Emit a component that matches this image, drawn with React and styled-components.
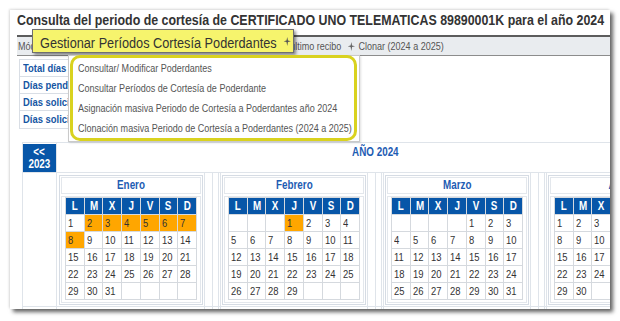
import React from "react";
import styled, { createGlobalStyle } from "styled-components";

const FONT = `"Liberation Sans", Arial, sans-serif`;

const GlobalStyle = createGlobalStyle`
  html, body { margin: 0; padding: 0; background: #fff; }
  body { font-family: ${FONT}; }
  * { box-sizing: border-box; }
`;

/* the reference text is a narrow (Arial Narrow-like) face */
const Squeeze = styled.span`
  display: inline-block;
  white-space: nowrap;
  transform: scaleX(${(p) => p.$ratio || 0.82});
  transform-origin: ${(p) => (p.$center ? "center" : "left")} center;
`;

const Page = styled.div`
  width: 620px;
  height: 321px;
  padding: 10px 0 0 10px;
  overflow: hidden;
`;

const Card = styled.div`
  position: relative;
  width: 600px;
  height: 299px;
  padding-left: 7px;
  background: #fff;
  overflow: hidden;
  box-shadow: 3px 3px 4px rgba(0, 0, 0, 0.62), -1px -1px 2px rgba(0, 0, 0, 0.12);
`;

const Title = styled.h1`
  margin: 0;
  padding-bottom: 5px;
  font-size: 15px;
  line-height: 20px;
  font-weight: bold;
  color: #333;
  white-space: nowrap;
`;

const MenuBar = styled.div`
  height: 21px;
  padding-left: 1px;
  border-top: 2px solid #5c5c5c;
  border-bottom: 1px solid #8c8c8c;
  background: #e9ecef;
  font-size: 11px;
  line-height: 18px;
  color: #555;
  white-space: nowrap;
`;

const MenuInner = styled.div`
  display: flex;
  align-items: center;
  gap: 8px;
  height: 18px;
  transform: scaleX(0.82);
  transform-origin: left center;
`;

const MenuItem = styled.span`
  display: inline-flex;
  align-items: center;
  gap: 4px;
`;

const InfoTable = styled.div`
  width: 240px;
  margin: 3px 0 0 2px;
  border: 1px solid #d9dee5;
`;

const InfoRow = styled.div`
  display: grid;
  grid-template-columns: 150px 1fr;
  height: 17px;
  border-bottom: ${(p) => (p.$last ? "none" : "1px solid #d9dee5")};
`;

const InfoLabel = styled.div`
  padding-left: 3px;
  font-size: 11.5px;
  font-weight: bold;
  line-height: 16px;
  color: #1656a3;
  white-space: nowrap;
  border-right: 1px solid #d9dee5;
`;

const InfoValue = styled.div`
  font-size: 11px;
  line-height: 16px;
  text-align: right;
  padding-right: 4px;
  color: #333;
`;

const CalTable = styled.div`
  width: 690px;
  margin: 13px 0 0 5px;
  border-left: 1px solid #dfe4ea;
  border-top: 1px solid #dfe4ea;
`;

const HeaderRow = styled.div`
  display: flex;
  height: 30px;
  border-bottom: 1px solid #dfe4ea;
`;

const SideCell = styled.div`
  flex: 0 0 34px;
  border-right: 1px solid #dfe4ea;
`;

const PrevButton = styled.a`
  display: block;
  height: 28px;
  margin-top: 1px;
  padding-top: 2px;
  background: #0756a8;
  color: #fff;
  font-size: 12px;
  font-weight: bold;
  line-height: 12px;
  text-align: center;
  text-decoration: underline;
`;

const YearCell = styled.div`
  flex: 1;
  padding: 2px 19px 0 0;
  font-size: 12px;
  font-weight: bold;
  line-height: 14px;
  color: #1d5cb3;
  text-align: center;
`;

const MonthRow = styled.div`
  display: flex;
  border-bottom: 1px solid #dfe4ea;
`;

const MonthCell = styled.div`
  flex: 0 0 auto;
  padding: 2px 1px 1px ${(p) => (p.$first ? "2px" : "1px")};
  border-left: ${(p) => (p.$first ? "none" : "1px solid #dfe4ea")};
  border-right: 1px solid #dfe4ea;
`;

const Separator = styled.div`
  flex: 0 0 7px;
  margin: 0 1px 0 7px;
  border-left: 1px solid #dfe4ea;
  border-right: 1px solid #dfe4ea;
`;

const MonthBox = styled.div`
  display: flex;
  flex-direction: column;
  width: 144px;
  height: 130px;
  padding: 1px;
  border: 1px solid #d6dce4;
`;

const MonthTitle = styled.div`
  height: 17px;
  border: 1px solid #e3e7ec;
  font-size: 12px;
  font-weight: bold;
  line-height: 15px;
  color: #1d5cb3;
  text-align: center;
`;

const MonthBody = styled.div`
  flex: 1;
  margin-top: 2px;
  padding: 0 3px 2px 3px;
  border: 1px solid #e3e7ec;
`;

const DayGrid = styled.div`
  display: grid;
  grid-template-columns: repeat(7, 1fr);
  grid-auto-rows: 16px;
  gap: 1px;
  border: 1px solid #d5d9de;
  background: #d5d9de;
`;

const HeadCell = styled.div`
  background: #0756a8;
  color: #fff;
  font-size: 12px;
  font-weight: bold;
  line-height: 16px;
  text-align: center;
`;

const DayCell = styled.div`
  background: ${(p) => (p.$marked ? "#ffa600" : "#fff")};
  color: #333;
  font-size: 11.5px;
  line-height: 16px;
  padding-left: 2px;
`;

const Tooltip = styled.div`
  position: absolute;
  left: 22px;
  top: 19px;
  width: 262px;
  height: 24px;
  padding-left: 7px;
  background: #f6f46d;
  border: 1px solid #6f6f6f;
  box-shadow: 2px 2px 3px rgba(0, 0, 0, 0.45);
  font-size: 15.5px;
  line-height: 22px;
  color: #333;
  white-space: nowrap;
`;

const TipIcon = styled.span`
  display: inline-block;
  margin-left: 8px;
  vertical-align: 2px;
`;

const MenuPanel = styled.div`
  position: absolute;
  left: 58px;
  top: 45px;
  width: 292px;
  height: 87px;
  background: #fff;
  border: 1px solid #cacaca;
  box-shadow: 1px 1px 2px rgba(0, 0, 0, 0.12);
`;

const Highlight = styled.div`
  height: 86px;
  margin: -1px 2px 0 1px;
  padding-left: 5px;
  border: 3px solid #d9d21f;
  border-radius: 10px;
`;

const PanelItem = styled.div`
  font-size: 11px;
  line-height: 20px;
  color: #555;
  white-space: nowrap;
  transform: scaleX(0.82);
  transform-origin: left center;
`;

const Star = ({ color = "#666" }) => (
  <svg width="9" height="9" viewBox="0 0 9 9">
    <path d="M4.5 0 L5.4 3.4 L9 4.2 L5.4 5 L4.5 9 L3.6 5 L0 4.2 L3.6 3.4 Z" fill={color} />
  </svg>
);

const DOW = ["L", "M", "X", "J", "V", "S", "D"];

const MONTHS = [
  [
    { name: "Enero", offset: 0, days: 31, marked: [2, 3, 4, 5, 6, 7, 8] },
    { name: "Febrero", offset: 3, days: 29, marked: [1] },
    { name: "Marzo", offset: 4, days: 31, marked: [] },
    { name: "Abril", offset: 0, days: 30, marked: [] },
  ],
  [
    { name: "Mayo", offset: 2, days: 31, marked: [] },
    { name: "Junio", offset: 5, days: 30, marked: [] },
    { name: "Julio", offset: 0, days: 31, marked: [] },
    { name: "Agosto", offset: 3, days: 31, marked: [] },
  ],
];

function Month({ month }) {
  const total = Math.ceil((month.offset + month.days) / 7) * 7;
  const cells = [];
  for (let i = 0; i < total; i++) {
    const d = i - month.offset + 1;
    const valid = d >= 1 && d <= month.days;
    cells.push(
      <DayCell key={i} $marked={valid && month.marked.includes(d)}>
        {valid ? <Squeeze>{d}</Squeeze> : ""}
      </DayCell>
    );
  }
  return (
    <MonthBox>
      <MonthTitle>
        <Squeeze $center>{month.name}</Squeeze>
      </MonthTitle>
      <MonthBody>
        <DayGrid>
          {DOW.map((d) => (
            <HeadCell key={d}>
              <Squeeze $center>{d}</Squeeze>
            </HeadCell>
          ))}
          {cells}
        </DayGrid>
      </MonthBody>
    </MonthBox>
  );
}

const INFO = [
  ["Total días cortesía", "30"],
  ["Días pendientes", "22"],
  ["Días solicitados", "8"],
  ["Días solicitados (pend.)", "0"],
];

export default function App() {
  return (
    <>
      <GlobalStyle />
      <Page>
        <Card>
          <Title>
            <Squeeze $ratio={0.826}>
              Consulta del periodo de cortesía de CERTIFICADO UNO TELEMATICAS 89890001K para el año 2024
            </Squeeze>
          </Title>
          <MenuBar>
            <MenuInner>
              <MenuItem>Módulo de Poderdantes</MenuItem>
              <MenuItem>
                <Star /> Gestionar Períodos Cortesía
              </MenuItem>
              <MenuItem>
                <Star /> Fecha último recibo
              </MenuItem>
              <MenuItem>
                <Star /> Clonar (2024 a 2025)
              </MenuItem>
            </MenuInner>
          </MenuBar>
          <InfoTable>
            {INFO.map(([label, value], i) => (
              <InfoRow key={label} $last={i === INFO.length - 1}>
                <InfoLabel>
                  <Squeeze>{label}</Squeeze>
                </InfoLabel>
                <InfoValue>{value}</InfoValue>
              </InfoRow>
            ))}
          </InfoTable>
          <CalTable>
            <HeaderRow>
              <SideCell>
                <PrevButton>
                  <Squeeze $center>&lt;&lt;</Squeeze>
                  <br />
                  <Squeeze $center>2023</Squeeze>
                </PrevButton>
              </SideCell>
              <YearCell>
                <Squeeze $center>AÑO 2024</Squeeze>
              </YearCell>
            </HeaderRow>
            {MONTHS.map((row, r) => (
              <MonthRow key={r}>
                <SideCell />
                {row.map((m, i) => (
                  <React.Fragment key={m.name}>
                    <MonthCell $first={i === 0}>
                      <Month month={m} />
                    </MonthCell>
                    <Separator />
                  </React.Fragment>
                ))}
              </MonthRow>
            ))}
          </CalTable>
          <Tooltip>
            <Squeeze>
              Gestionar Períodos Cortesía Poderdantes
              <TipIcon>
                <Star color="#555" />
              </TipIcon>
            </Squeeze>
          </Tooltip>
          <MenuPanel>
            <Highlight>
              <PanelItem>Consultar/ Modificar Poderdantes</PanelItem>
              <PanelItem>Consultar Períodos de Cortesía de Poderdante</PanelItem>
              <PanelItem>Asignación masiva Periodo de Cortesía a Poderdantes año 2024</PanelItem>
              <PanelItem>Clonación masiva Periodo de Cortesía a Poderdantes (2024 a 2025)</PanelItem>
            </Highlight>
          </MenuPanel>
        </Card>
      </Page>
    </>
  );
}
